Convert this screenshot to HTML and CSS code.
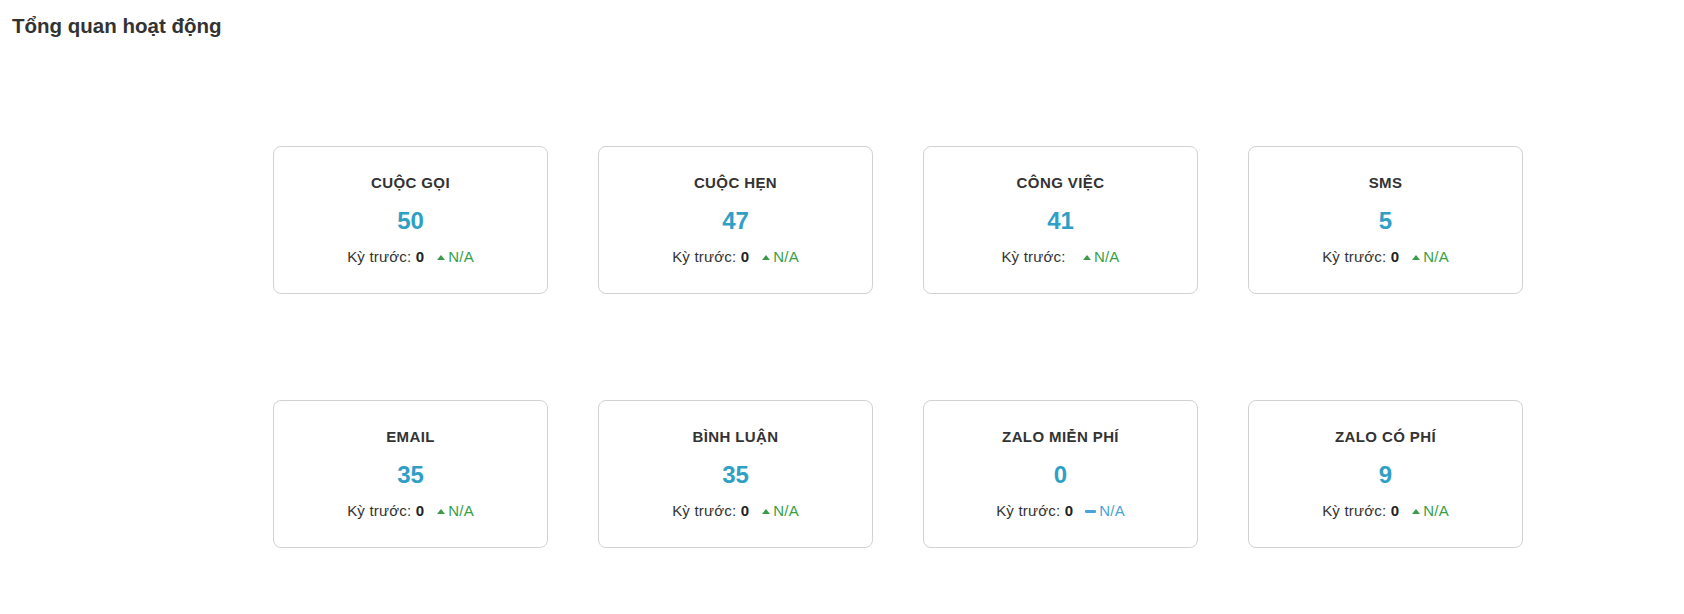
FILE: index.html
```html
<!DOCTYPE html>
<html lang="vi">
<head>
<meta charset="utf-8">
<title>Tổng quan hoạt động</title>
<link rel="stylesheet" href="styles.css">
</head>
<body>
<h1 class="title">Tổng quan hoạt động</h1>
<div class="grid">
  <div class="card"><div class="label">CUỘC GỌI</div><div class="num">50</div><div class="prev">Kỳ trước: <b>0</b><span class="up"></span><span class="na">N/A</span></div></div>
  <div class="card"><div class="label">CUỘC HẸN</div><div class="num">47</div><div class="prev">Kỳ trước: <b>0</b><span class="up"></span><span class="na">N/A</span></div></div>
  <div class="card"><div class="label">CÔNG VIỆC</div><div class="num">41</div><div class="prev">Kỳ trước: <b></b><span class="up"></span><span class="na">N/A</span></div></div>
  <div class="card"><div class="label">SMS</div><div class="num">5</div><div class="prev">Kỳ trước: <b>0</b><span class="up"></span><span class="na">N/A</span></div></div>
  <div class="card"><div class="label">EMAIL</div><div class="num">35</div><div class="prev">Kỳ trước: <b>0</b><span class="up"></span><span class="na">N/A</span></div></div>
  <div class="card"><div class="label">BÌNH LUẬN</div><div class="num">35</div><div class="prev">Kỳ trước: <b>0</b><span class="up"></span><span class="na">N/A</span></div></div>
  <div class="card"><div class="label">ZALO MIỄN PHÍ</div><div class="num">0</div><div class="prev">Kỳ trước: <b>0</b><span class="flat"></span><span class="na na-blue">N/A</span></div></div>
  <div class="card"><div class="label">ZALO CÓ PHÍ</div><div class="num">9</div><div class="prev">Kỳ trước: <b>0</b><span class="up"></span><span class="na">N/A</span></div></div>
</div>
</body>
</html>
```
FILE: styles.css
```css
html, body {
  margin: 0;
  padding: 0;
  background: #fff;
  font-family: "Liberation Sans", Arial, sans-serif;
  color: #333;
}
.title {
  margin: 0;
  padding: 14px 0 0 12px;
  font-size: 20.5px;
  line-height: 24px;
  font-weight: bold;
  color: #333;
}
.grid {
  display: grid;
  grid-template-columns: repeat(4, 275px);
  column-gap: 50px;
  row-gap: 106px;
  margin: 108px 0 0 273px;
}
.card {
  box-sizing: border-box;
  height: 148px;
  border: 1px solid #d2d2d2;
  border-radius: 8px;
  display: flex;
  flex-direction: column;
  align-items: center;
  padding-top: 27px;
}
.label {
  font-size: 15px;
  line-height: 18px;
  font-weight: bold;
  color: #333;
  letter-spacing: 0.4px;
}
.num {
  margin-top: 15px;
  font-size: 24px;
  line-height: 28px;
  font-weight: bold;
  color: #2f9fc6;
}
.prev {
  margin-top: 12px;
  font-size: 15px;
  line-height: 20px;
  color: #333;
  display: flex;
  align-items: center;
  white-space: pre;
  letter-spacing: 0.2px;
}
.prev b {
  font-weight: bold;
  color: #222;
}
.up {
  display: inline-block;
  width: 0;
  height: 0;
  border-left: 4px solid transparent;
  border-right: 4px solid transparent;
  border-bottom: 5px solid #3d9a4b;
  margin: 0 3px 0 13px;
}
.flat {
  display: inline-block;
  width: 11px;
  height: 3px;
  border-radius: 1px;
  background: #4aa3d6;
  margin: 0 3px 0 12px;
}
.na {
  color: #36a048;
  font-size: 15px;
}
.na-blue {
  color: #4aa3d6;
}
```
